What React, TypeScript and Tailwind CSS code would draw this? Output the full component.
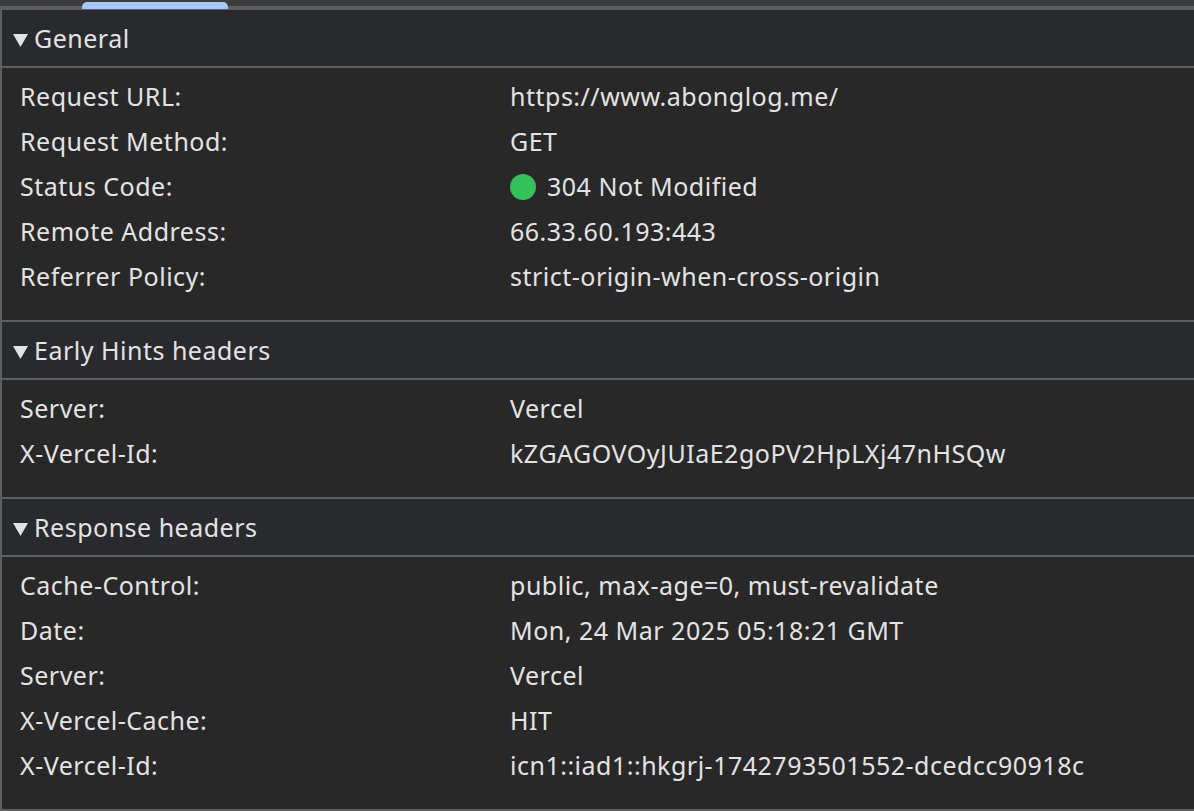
const sections = [
  {
    title: 'General',
    rows: [
      ['Request URL:', 'https://www.abonglog.me/'],
      ['Request Method:', 'GET'],
      ['Status Code:', '304 Not Modified'],
      ['Remote Address:', '66.33.60.193:443'],
      ['Referrer Policy:', 'strict-origin-when-cross-origin'],
    ],
  },
  {
    title: 'Early Hints headers',
    rows: [
      ['Server:', 'Vercel'],
      ['X-Vercel-Id:', 'kZGAGOVOyJUIaE2goPV2HpLXj47nHSQw'],
    ],
  },
  {
    title: 'Response headers',
    rows: [
      ['Cache-Control:', 'public, max-age=0, must-revalidate'],
      ['Date:', 'Mon, 24 Mar 2025 05:18:21 GMT'],
      ['Server:', 'Vercel'],
      ['X-Vercel-Cache:', 'HIT'],
      ['X-Vercel-Id:', 'icn1::iad1::hkgrj-1742793501552-dcedcc90918c'],
    ],
  },
]

function Section({ title, rows }: { title: string; rows: string[][] }) {
  return (
    <div className="border-t-[2px] border-[#5e5e5e]">
      {/* section header */}
      <div className="flex h-[58px] items-center bg-[#292a2d] border-b-[2px] border-[#5e5e5e] pl-[11px]">
        <svg width="15" height="14" viewBox="0 0 15 14" className="mr-[6px] mt-[3px]">
          <path d="M0 1 L15 1 L7.5 14 Z" fill="#e3e3e3" />
        </svg>
        <span className="pt-[2px]">{title}</span>
      </div>
      <div className="pt-[6px] pb-[21px]">
        {rows.map(([k, v], i) => (
          <div key={i} className="flex h-[45px] items-center">
            <div className="w-[508px] pl-[18px]">{k}</div>
            <div className="flex items-center">
              {v === '304 Not Modified' && (
                <span className="mr-[11px] inline-block h-[26px] w-[26px] rounded-full bg-[#34c15a]" />
              )}
              {v}
            </div>
          </div>
        ))}
      </div>
    </div>
  )
}

export default function App() {
  return (
    <div
      className="h-[811px] w-[1194px] overflow-hidden bg-[#282828] text-[25px] tracking-[0.5px] text-[#e3e3e3]"
      style={{ fontFamily: '"Noto Sans", "Open Sans", sans-serif' }}
    >
      {/* tab strip */}
      <div className="relative h-[6px] bg-[#3c3c3c]">
        <div className="absolute left-[82px] top-[2px] z-10 h-[7px] w-[146px] rounded-t-[5px] bg-[#a8c7fa]" />
      </div>
      <div className="border-l-[2px] border-b-[2px] border-[#5e5e5e] [&>div:first-child]:border-t-[4px]">
        {sections.map((s) => (
          <Section key={s.title} title={s.title} rows={s.rows} />
        ))}
      </div>
    </div>
  )
}
